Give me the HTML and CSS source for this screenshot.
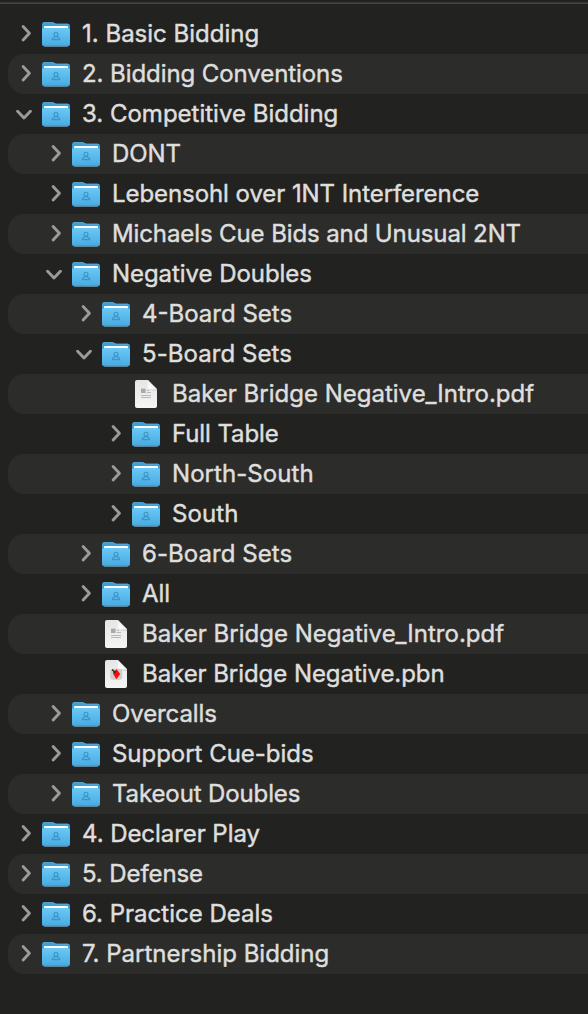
FILE: index.html
```html
<!DOCTYPE html>
<html lang="en">
<head>
<meta charset="utf-8">
<title>Files</title>
<link rel="stylesheet" href="styles.css">
</head>
<body>
<svg class="defs" aria-hidden="true">
  <defs>
    <linearGradient id="front" x1="0" y1="0" x2="0" y2="1">
      <stop offset="0" stop-color="#6bc7f5"/><stop offset=".5" stop-color="#58baec"/><stop offset="1" stop-color="#47a9df"/>
    </linearGradient>
    <linearGradient id="sheet" x1="0" y1="0" x2="0" y2="1">
      <stop offset="0" stop-color="#e6e6e6"/><stop offset="1" stop-color="#f5f5f5"/>
    </linearGradient>
    <linearGradient id="fold" x1="0" y1="1" x2="1" y2="0">
      <stop offset="0" stop-color="#fff"/><stop offset=".5" stop-color="#f2f2f2"/><stop offset="1" stop-color="#ccc"/>
    </linearGradient>
  </defs>
  <symbol id="right" viewBox="0 0 16 20"><path class="chev" d="M7.1 2.6 13.4 9.3 7.1 16"/></symbol>
  <symbol id="down" viewBox="0 0 16 20"><path class="chev" d="M1.6 7.2 8 14 14.4 7.2"/></symbol>
  <symbol id="folder" viewBox="0 0 28 26">
    <rect x="1.5" y="10" width="25" height="15" rx="2" fill="#71716f"/>
    <path d="M0 2.4Q0 .2 2.2.2H10.5C12.5.2 12.5 1.8 14.5 1.8H26Q28 1.8 28 4V22H0Z" fill="#3e9fd4"/>
    <path d="M1 1.2Q1.5.6 2.5.6H10.5C12 .6 12.2 2.2 14.5 2.2H26" fill="none" stroke="#62b9e6" stroke-width=".7"/>
    <path d="M2 7V5Q2 4 3 4H25Q26 4 26 5V7Z" fill="#fff"/>
    <path d="M0 7.6Q0 6.6 1.4 6.6L2.4 6.1H25.6L26.6 6.6Q28 6.6 28 7.6V22Q28 24.2 25.8 24.2H2.2Q0 24.2 0 22Z" fill="url(#front)"/>
    <path d="M.5 22.4Q.8 23.8 2.4 23.8H25.6Q27.2 23.8 27.5 22.4" fill="none" stroke="#3a97cb" stroke-width=".8"/>
    <g fill="none" stroke="#3f93c2" stroke-width="1.1" stroke-linejoin="round"><circle cx="14" cy="12.2" r="2"/><path d="M12.9 14.1V14.9L10.4 16.2V17.6H17.6V16.2L15.1 14.9V14.1"/></g>
  </symbol>
  <symbol id="page" viewBox="0 0 28 28">
    <path d="M3 2Q3 0 5 0H15.8L25 9.2V26Q25 28 23 28H5Q3 28 3 26Z" fill="url(#sheet)"/>
    <path d="M16.3 9.3H25V11L17 10Z" fill="#d2d2d2"/>
    <path d="M15.8 0 25 9.2H17.5Q15.8 9.2 15.8 7.5Z" fill="url(#fold)"/>
  </symbol>
  <symbol id="pdf" viewBox="0 0 28 28">
    <use href="#page"/>
    <rect x="9" y="8.6" width="4.6" height="4.4" fill="#aaa"/>
    <path d="M14.8 10.5H17M14.8 12.5H19M9 15.5H19M9 17.5H19" stroke="#b8b8b8"/>
  </symbol>
  <symbol id="pbn" viewBox="0 0 28 28">
    <use href="#page"/>
    <rect x="8.2" y="8.8" width="12" height="11" rx="3" fill="#ccc"/>
    <path d="M14.4 9 18.2 14 14.4 19.3 11.2 14Z" fill="#fb0c0c"/>
    <path d="M10 9.6 13.5 12.5M11.3 13.2 14 11.2" stroke="#302222" stroke-width="1.4"/>
  </symbol>
</svg>
<main class="browser">
  <div class="divider"></div>
  <ul class="tree" id="tree"></ul>
</main>
<script src="tree.js"></script>
</body>
</html>
```
FILE: styles.css
```css
body {
  margin: 0;
  background: #222220;
  color: #dededd;
  font-family: Inter, "Liberation Sans", sans-serif;
}
.defs { position: absolute; width: 0; height: 0; }
.browser { display: flow-root; height: 1014px; overflow: hidden; }
.divider { height: 1px; margin-top: 2px; background: #373736; border-bottom: 1px solid #424241; }
.tree { list-style: none; margin: 10px 0 0 8px; padding: 0; }
.row {
  display: flex;
  align-items: center;
  height: 40px;
  border-radius: 16px 0 0 16px;
}
.row:nth-child(even) { background: #2c2c2b; }
.level-0 { padding-left: 8px; }
.level-1 { padding-left: 38px; }
.level-2 { padding-left: 68px; }
.level-3 { padding-left: 98px; }
.arrow { width: 16px; height: 20px; margin-right: 10px; flex: none; }
.chev { fill: none; stroke: #9b9b99; stroke-width: 2.9; stroke-linecap: round; stroke-linejoin: round; }
.icon { width: 28px; height: 28px; margin-right: 12px; flex: none; }
.folder { height: 26px; margin-top: 2px; }
.label { font-size: 24px; line-height: 40px; white-space: nowrap; -webkit-text-stroke: .45px #dededd; }
```
FILE: tree.js
```js
// level, arrow, icon, name, letter spacing in px
const rows = [
  [0, "right", "folder", "1. Basic Bidding", 0],
  [0, "right", "folder", "2. Bidding Conventions", -0.08],
  [0, "down", "folder", "3. Competitive Bidding", 0],
  [1, "right", "folder", "DONT", -0.1],
  [1, "right", "folder", "Lebensohl over 1NT Interference", -0.07],
  [1, "right", "folder", "Michaels Cue Bids and Unusual 2NT", -0.11],
  [1, "down", "folder", "Negative Doubles", -0.06],
  [2, "right", "folder", "4-Board Sets", 0],
  [2, "down", "folder", "5-Board Sets", 0.06],
  [3, "", "pdf", "Baker Bridge Negative_Intro.pdf", 0],
  [3, "right", "folder", "Full Table", -0.1],
  [3, "right", "folder", "North-South", 0.06],
  [3, "right", "folder", "South", 0.1],
  [2, "right", "folder", "6-Board Sets", 0.06],
  [2, "right", "folder", "All", 0],
  [2, "", "pdf", "Baker Bridge Negative_Intro.pdf", 0],
  [2, "", "pbn", "Baker Bridge Negative.pbn", -0.06],
  [1, "right", "folder", "Overcalls", -0.1],
  [1, "right", "folder", "Support Cue-bids", -0.03],
  [1, "right", "folder", "Takeout Doubles", -0.12],
  [0, "right", "folder", "4. Declarer Play", -0.06],
  [0, "right", "folder", "5. Defense", -0.1],
  [0, "right", "folder", "6. Practice Deals", 0],
  [0, "right", "folder", "7. Partnership Bidding", 0]
];
document.getElementById("tree").innerHTML = rows.map(([level, arrow, icon, name, spacing]) =>
  `<li class="row level-${level}">
    <svg class="arrow">${arrow ? `<use href="#${arrow}"/>` : ""}</svg>
    <svg class="icon ${icon}"><use href="#${icon}"/></svg>
    <span class="label" style="letter-spacing:${spacing}px">${name}</span>
  </li>`).join("");
```
